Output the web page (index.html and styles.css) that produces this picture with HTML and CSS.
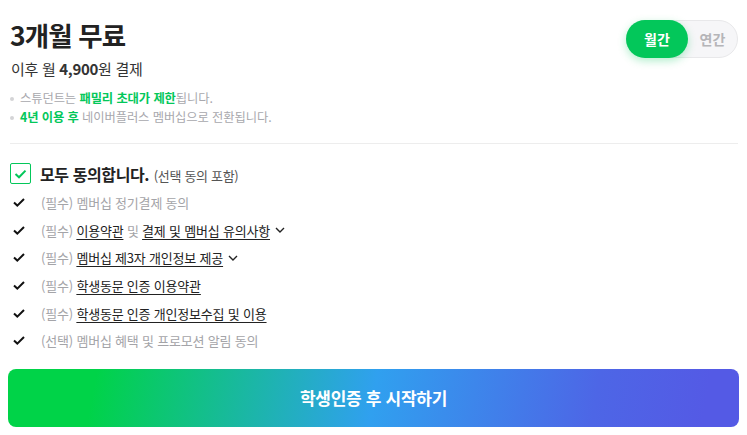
FILE: index.html
```html
<!DOCTYPE html>
<html lang="ko">
<head>
  <meta charset="UTF-8">
  <title>3개월 무료</title>
  <link rel="stylesheet" href="styles.css">
</head>
<body>

  <div class="page">
    <div class="header">
      <div class="plan">
        <h1>3개월 무료</h1>
        <p class="price">이후 월 <b>4,900</b>원 결제</p>
      </div>
      <div class="toggle">
        <span class="tab active">월간</span>
        <span class="tab">연간</span>
      </div>
    </div>

    <ul class="notes">
      <li>스튜던트는 <em>패밀리 초대가 제한</em>됩니다.</li>
      <li><em>4년 이용 후</em> 네이버플러스 멤버십으로 전환됩니다.</li>
    </ul>

    <hr class="divider">

    <div class="agree-all">
      <span class="box">
        <svg width="13" height="10" viewBox="0 0 13 10"><path d="M1.5 5 L5 8.3 L11.5 1.6" fill="none" stroke="#03c75a" stroke-width="2"/></svg>
      </span>
      <span class="label"><strong>모두 동의합니다.</strong> <span class="sub">(선택 동의 포함)</span></span>
    </div>

    <ul class="terms">
      <li>
        <svg class="check" width="12" height="9" viewBox="0 0 12 9"><path d="M1 4.5 L4.3 7.6 L11 1" fill="none" stroke="#111" stroke-width="2"/></svg>
        <span class="label"><span class="tag">(필수)</span> <span class="muted">멤버십 정기결제 동의</span></span>
      </li>
      <li>
        <svg class="check" width="12" height="9" viewBox="0 0 12 9"><path d="M1 4.5 L4.3 7.6 L11 1" fill="none" stroke="#111" stroke-width="2"/></svg>
        <span class="label"><span class="tag">(필수)</span> <a href="#">이용약관</a> <span class="tag">및</span> <a href="#">결제 및 멤버십 유의사항</a></span>
        <svg class="chev" width="10" height="6" viewBox="0 0 10 6"><path d="M1 1 L5 5 L9 1" fill="none" stroke="#222" stroke-width="1.4"/></svg>
      </li>
      <li>
        <svg class="check" width="12" height="9" viewBox="0 0 12 9"><path d="M1 4.5 L4.3 7.6 L11 1" fill="none" stroke="#111" stroke-width="2"/></svg>
        <span class="label"><span class="tag">(필수)</span> <a href="#">멤버십 제3자 개인정보 제공</a></span>
        <svg class="chev" width="10" height="6" viewBox="0 0 10 6"><path d="M1 1 L5 5 L9 1" fill="none" stroke="#222" stroke-width="1.4"/></svg>
      </li>
      <li>
        <svg class="check" width="12" height="9" viewBox="0 0 12 9"><path d="M1 4.5 L4.3 7.6 L11 1" fill="none" stroke="#111" stroke-width="2"/></svg>
        <span class="label"><span class="tag">(필수)</span> <a href="#">학생동문 인증 이용약관</a></span>
      </li>
      <li>
        <svg class="check" width="12" height="9" viewBox="0 0 12 9"><path d="M1 4.5 L4.3 7.6 L11 1" fill="none" stroke="#111" stroke-width="2"/></svg>
        <span class="label"><span class="tag">(필수)</span> <a href="#">학생동문 인증 개인정보수집 및 이용</a></span>
      </li>
      <li>
        <svg class="check" width="12" height="9" viewBox="0 0 12 9"><path d="M1 4.5 L4.3 7.6 L11 1" fill="none" stroke="#111" stroke-width="2"/></svg>
        <span class="label"><span class="tag">(선택)</span> <span class="muted">멤버십 혜택 및 프로모션 알림 동의</span></span>
      </li>
    </ul>

    <button class="start">학생인증 후 시작하기</button>
  </div>

</body>
</html>
```

FILE: styles.css
```css
body {
  margin: 0;
  background-color: #fff;
  color: #222;
  font-family: "Noto Sans CJK KR", "Noto Sans", sans-serif;
}

.page {
  padding: 18px 9px 0 10px;
}

.header {
  display: flex;
  justify-content: space-between;
  align-items: flex-start;
}

h1 {
  margin: 0;
  font-size: 26.5px;
  line-height: 34px;
  font-weight: 700;
  letter-spacing: -0.9px;
  color: #222;
}

.price {
  margin: 7px 0 0 1px;
  font-size: 15px;
  line-height: 20px;
  color: #333;
  letter-spacing: -0.3px;
}

.price b {
  font-weight: 700;
}

.toggle {
  display: flex;
  margin-top: 2px;
  width: 110px;
  height: 36px;
  border: 1px solid #e8e8ea;
  border-radius: 19px;
  background-color: #f6f6f8;
}

.tab {
  flex: 1;
  display: flex;
  align-items: center;
  justify-content: center;
  font-size: 14px;
  font-weight: 700;
  color: #b5b5b8;
  border-radius: 19px;
}

.tab.active {
  margin: -1px 0 -1px -1px;
  flex: 0 0 62px;
  background-color: #03c75a;
  color: #fff;
  box-shadow: 0 3px 8px rgba(3, 199, 90, 0.3);
}

.notes {
  list-style: none;
  margin: 10px 0 0;
  padding: 0;
}

.notes li {
  position: relative;
  padding-left: 10px;
  font-size: 12.3px;
  line-height: 19px;
  color: #a8a8ad;
  letter-spacing: -0.1px;
}

.notes li::before {
  content: "";
  position: absolute;
  left: 0;
  top: 8px;
  width: 4px;
  height: 4px;
  border-radius: 50%;
  background-color: #d4d4d6;
}

.notes em {
  font-style: normal;
  font-weight: 700;
  color: #03c75a;
}

.divider {
  margin: 16px 0 0;
  border: none;
  border-top: 1px solid #ededed;
}

.agree-all {
  display: flex;
  align-items: center;
  margin-top: 19px;
  height: 21px;
}

.box {
  display: flex;
  align-items: center;
  justify-content: center;
  box-sizing: border-box;
  width: 21px;
  height: 21px;
  border: 1.5px solid #03c75a;
  border-radius: 2px;
  margin-right: 9px;
}

.agree-all strong {
  font-size: 16px;
  font-weight: 700;
  color: #222;
  letter-spacing: -0.4px;
}

.agree-all .sub {
  font-size: 13px;
  color: #555;
  letter-spacing: -0.3px;
}

.terms {
  list-style: none;
  margin: 5px 0 0;
  padding: 0;
}

.terms li {
  display: flex;
  align-items: center;
  height: 27.6px;
  font-size: 13px;
  color: #222;
  letter-spacing: -0.2px;
}

.check {
  margin: 0 16px 0 3px;
}

.tag,
.muted {
  color: #a4a4a8;
}

.terms a {
  color: #222;
  text-decoration: underline;
  text-underline-offset: 3px;
}

.chev {
  margin-left: 5px;
}

.start {
  display: block;
  height: 58px;
  margin-top: 14px;
  margin-left: -2px;
  width: calc(100% + 3px);
  border: none;
  border-radius: 8px;
  background: linear-gradient(100deg, #00d348 12%, #30a0ef 50%, #4d66e6 80%, #545ae5 95%);
  color: #fff;
  font-family: inherit;
  font-size: 17px;
  font-weight: 700;
  letter-spacing: -0.3px;
  cursor: pointer;
}
```
